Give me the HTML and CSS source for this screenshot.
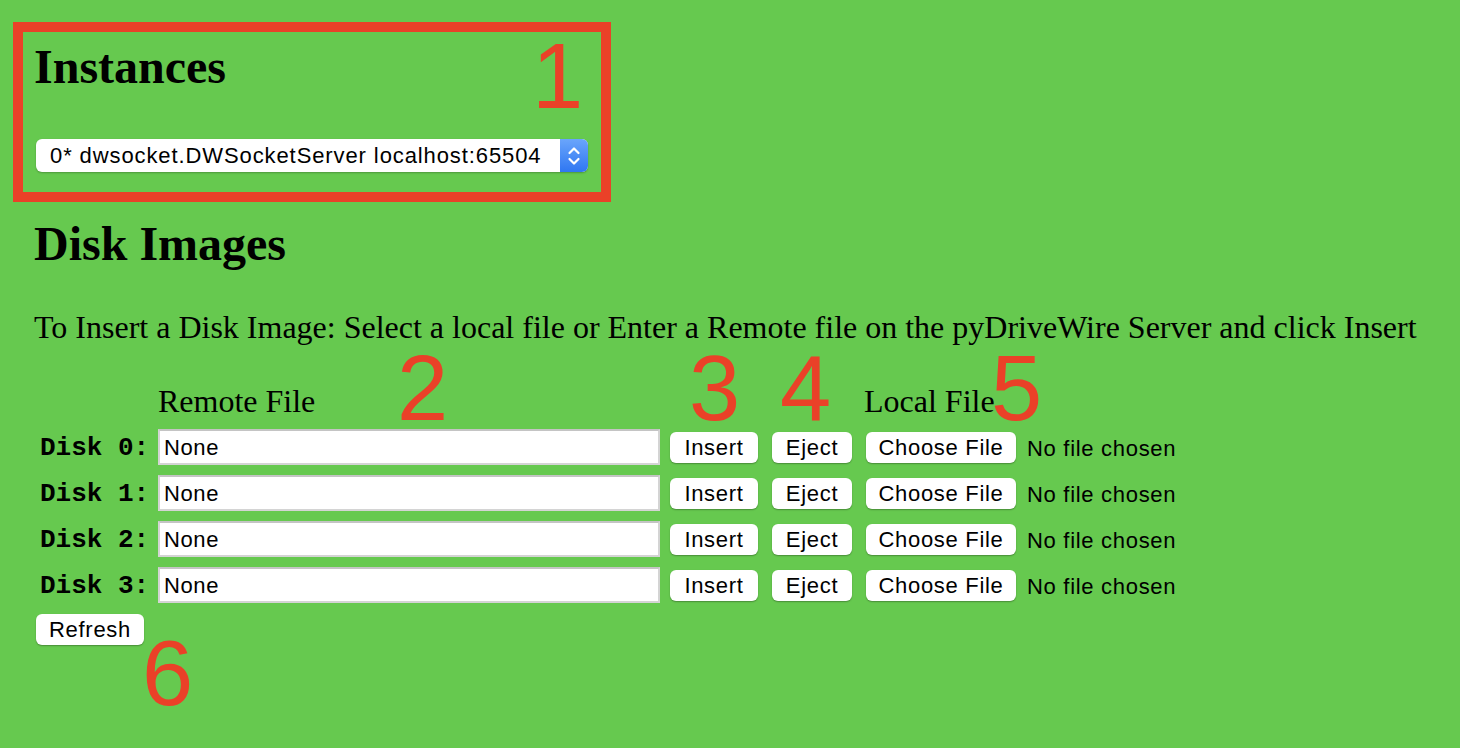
FILE: index.html
```html
<!DOCTYPE html>
<html>
<head>
<meta charset="utf-8">
<title>pyDriveWire</title>
<link rel="stylesheet" href="styles.css">
</head>
<body>
<div class="page">
  <h2 class="heading first">Instances</h2>
  <div class="select">
    <span class="select-text">0* dwsocket.DWSocketServer localhost:65504</span>
    <span class="select-arrow">
      <svg width="14" height="22" viewBox="0 0 14 22"><path d="M2.5 8 L7 3.5 L11.5 8 M2.5 14 L7 18.5 L11.5 14" fill="none" stroke="#fff" stroke-width="2.2" stroke-linecap="round" stroke-linejoin="round"/></svg>
    </span>
  </div>
  <h2 class="heading">Disk Images</h2>
  <p class="intro">To Insert a Disk Image: Select a local file or Enter a Remote file on the pyDriveWire Server and click Insert</p>
  <div class="disks">
    <div class="row head">
      <div></div>
      <div class="hdr">Remote File</div>
      <div></div>
      <div></div>
      <div class="hdr hdr-local">Local File</div>
      <div></div>
    </div>

    <div class="row">
      <div class="label">Disk 0:</div>
      <div class="cell"><div class="input">None</div></div>
      <div class="cell"><div class="btn btn-insert">Insert</div></div>
      <div class="cell"><div class="btn btn-eject">Eject</div></div>
      <div class="cell"><div class="btn btn-choose">Choose File</div></div>
      <div class="cell nofile">No file chosen</div>
    </div>

    <div class="row">
      <div class="label">Disk 1:</div>
      <div class="cell"><div class="input">None</div></div>
      <div class="cell"><div class="btn btn-insert">Insert</div></div>
      <div class="cell"><div class="btn btn-eject">Eject</div></div>
      <div class="cell"><div class="btn btn-choose">Choose File</div></div>
      <div class="cell nofile">No file chosen</div>
    </div>

    <div class="row">
      <div class="label">Disk 2:</div>
      <div class="cell"><div class="input">None</div></div>
      <div class="cell"><div class="btn btn-insert">Insert</div></div>
      <div class="cell"><div class="btn btn-eject">Eject</div></div>
      <div class="cell"><div class="btn btn-choose">Choose File</div></div>
      <div class="cell nofile">No file chosen</div>
    </div>

    <div class="row">
      <div class="label">Disk 3:</div>
      <div class="cell"><div class="input">None</div></div>
      <div class="cell"><div class="btn btn-insert">Insert</div></div>
      <div class="cell"><div class="btn btn-eject">Eject</div></div>
      <div class="cell"><div class="btn btn-choose">Choose File</div></div>
      <div class="cell nofile">No file chosen</div>
    </div>
  </div>
  <div class="btn btn-refresh">Refresh</div>
</div>

<div class="frame"></div>
<div class="ann ann-1">1</div>
<div class="ann ann-2">2</div>
<div class="ann ann-3">3</div>
<div class="ann ann-4">4</div>
<div class="ann ann-5">5</div>
<div class="ann ann-6">6</div>
</body>
</html>
```

FILE: styles.css
```css
html, body {
  margin: 0;
  padding: 0;
  background: #66c94f;
}
body {
  position: relative;
  width: 1460px;
  height: 748px;
  overflow: hidden;
  font-family: "Liberation Serif", "Times New Roman", serif;
  color: #000;
}
.page {
  padding-left: 34px;
}
.heading {
  font-size: 48px;
  line-height: 56px;
  font-weight: bold;
  margin: 44px 0 0 0;
}
.heading.first {
  margin-top: 39px;
}
.select {
  margin: 44px 0 0 2px;
  width: 552px;
  height: 33px;
  background: #fff;
  border-radius: 6px;
  box-shadow: 0 1px 2px rgba(0,0,0,0.25);
  display: flex;
  align-items: center;
  overflow: hidden;
}
.select-text {
  flex: 1;
  padding-left: 14px;
  padding-top: 1px;
  font-family: "Liberation Sans", Arial, sans-serif;
  font-size: 22px;
  letter-spacing: 0.9px;
  white-space: nowrap;
}
.select-arrow {
  width: 28px;
  height: 33px;
  background: linear-gradient(#6aa5fb, #2f77f2);
  display: flex;
  align-items: center;
  justify-content: center;
}
.intro {
  font-size: 32px;
  line-height: 37px;
  margin: 37px 0 0 0;
  white-space: nowrap;
}
.disks {
  margin-top: 37px;
}
.row {
  display: grid;
  grid-template-columns: 124px 512px 102px 94px 161px auto;
  height: 46px;
}
.row.head {
  height: 41px;
}
.hdr {
  font-size: 32px;
  line-height: 37px;
  white-space: nowrap;
}
.hdr-local {
  margin-left: -2px;
}
.label {
  font-family: "Liberation Mono", "Courier New", monospace;
  font-weight: bold;
  font-size: 26px;
  padding-left: 6px;
  padding-top: 2px;
  display: flex;
  align-items: center;
  white-space: nowrap;
}
.cell {
  display: flex;
  align-items: center;
}
.input {
  box-sizing: border-box;
  width: 502px;
  height: 36px;
  background: #fff;
  border: 2px solid #d4d4d4;
  border-top-color: #c4c4c4;
  padding-left: 4px;
  padding-top: 2px;
  font-family: "Liberation Sans", Arial, sans-serif;
  font-size: 22px;
  letter-spacing: 0.6px;
  line-height: 30px;
}
.btn {
  box-sizing: border-box;
  height: 31px;
  padding-top: 1px;
  background: #fff;
  border-radius: 6px;
  box-shadow: 0 1px 1.5px rgba(0,0,0,0.3);
  font-family: "Liberation Sans", Arial, sans-serif;
  font-size: 22px;
  letter-spacing: 0.7px;
  line-height: 30px;
  text-align: center;
  white-space: nowrap;
}
.btn-insert { width: 88px; }
.btn-eject { width: 80px; }
.btn-choose { width: 150px; }
.nofile {
  font-family: "Liberation Sans", Arial, sans-serif;
  font-size: 22px;
  letter-spacing: 0.7px;
  padding-top: 3px;
  white-space: nowrap;
}
.btn-refresh {
  width: 108px;
  margin: 6px 0 0 2px;
}
.frame {
  position: absolute;
  left: 13px;
  top: 22px;
  width: 598px;
  height: 180px;
  box-sizing: border-box;
  border: 10px solid #ea4128;
}
.ann {
  position: absolute;
  font-family: "Liberation Sans", Arial, sans-serif;
  font-size: 92px;
  line-height: 70px;
  color: #ea4128;
}
.ann-1 { left: 532px; top: 41px; }
.ann-2 { left: 397px; top: 353px; }
.ann-3 { left: 689px; top: 353px; }
.ann-4 { left: 780px; top: 353px; }
.ann-5 { left: 991px; top: 353px; }
.ann-6 { left: 142px; top: 638px; }
```
